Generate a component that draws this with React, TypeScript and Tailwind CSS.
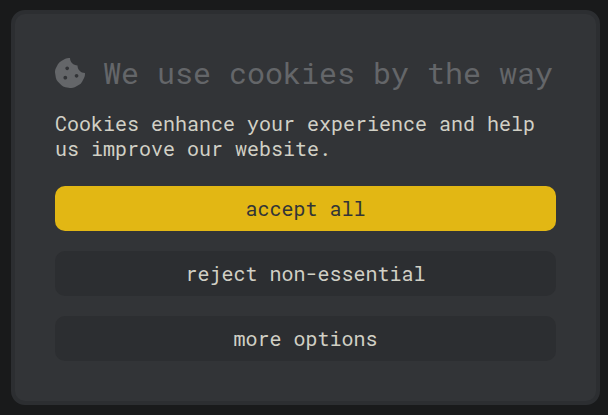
import { FaCookieBite } from "react-icons/fa";

const buttonBase =
  "h-[45px] w-full cursor-pointer rounded-[10px] text-center text-[20px] leading-[25px]";

export default function App() {
  return (
    <main className="min-h-screen bg-[#191a1b] pt-[10px] pr-2 pb-[10px] pl-[11px] font-['Roboto_Mono','Liberation_Mono',monospace]">
      <section
        role="dialog"
        aria-labelledby="cookie-title"
        className="flex flex-col rounded-[14px] border-4 border-[#2c2e31] bg-[#323437] p-10 text-[#d1d0c5]"
      >
        <h1
          id="cookie-title"
          className="flex items-center gap-[18px] text-[30px] leading-[38px] whitespace-nowrap text-[#646669]"
        >
          <FaCookieBite aria-hidden="true" className="size-[30px] shrink-0" />
          We use cookies by the way
        </h1>
        <p className="mt-[19px] text-[20px] leading-[25px] font-[450]">
          Cookies enhance your experience and help us improve our website.
        </p>
        <div className="mt-[25px] flex flex-col gap-5">
          <button type="button" className={`${buttonBase} bg-[#e2b714] text-[#323437]`}>
            accept all
          </button>
          <button type="button" className={`${buttonBase} bg-[#2c2e31] font-[450]`}>
            reject non-essential
          </button>
          <button type="button" className={`${buttonBase} bg-[#2c2e31] font-[450]`}>
            more options
          </button>
        </div>
      </section>
    </main>
  );
}
